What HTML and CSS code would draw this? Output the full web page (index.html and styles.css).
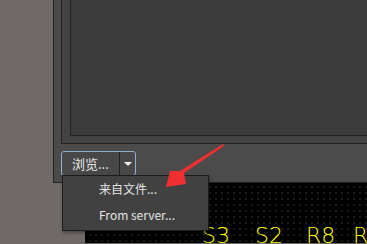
FILE: index.html
```html
<!DOCTYPE html>
<html lang="zh-cn">
<head>
  <meta charset="UTF-8">
  <title>浏览</title>
  <link rel="stylesheet" href="styles.css">
</head>
<body>

<div class="stage">
  <div class="frame">
    <div class="group">
      <div class="inner"></div>
    </div>
    <div class="toolbar">
      <div class="split-btn">
        <span class="btn-main">浏览...</span>
        <span class="btn-drop"><span class="tri"></span></span>
      </div>
    </div>
  </div>

  <div class="canvas">
    <span class="lbl" style="left: 117px">S3</span>
    <span class="lbl" style="left: 170px">S2</span>
    <span class="lbl" style="left: 221px">R8</span>
    <span class="lbl" style="left: 268px">R</span>
  </div>

  <!-- popup menu of the split button -->
  <ul class="menu">
    <li>来自文件...</li>
    <li>From server...</li>
  </ul>

  <svg class="pointer" width="367" height="244" viewBox="0 0 367 244">
    <polygon points="223,144 224,146 184,173 186,184 166,187 170,171 180,171" fill="#f03030"/>
  </svg>
</div>

</body>
</html>
```

FILE: styles.css
```css
body {
  margin: 0;
  padding: 0;
  font-family: "Noto Sans CJK SC", "Noto Sans", sans-serif;
}
.stage {
  position: relative;
  width: 367px;
  height: 244px;
  overflow: hidden;
  background-color: #6f6a68;
}
.frame {
  margin-left: 53px;
  margin-top: -2px;
  width: 330px;
  height: 185px;
  box-sizing: border-box;
  border: 1px solid #222;
  background-color: #4b4b4b;
  padding-left: 7px;
}
.group {
  height: 145px;
  box-sizing: border-box;
  border: 1px solid #222;
  border-right: none;
  background-color: #434343;
  padding-left: 8px;
}
.inner {
  height: 136px;
  box-sizing: border-box;
  border-left: 1px solid #222;
  border-bottom: 1px solid #222;
  background-color: #3b3b3b;
}
.toolbar {
  display: flex;
  margin-top: 7px;
}
.split-btn {
  display: flex;
  height: 25px;
  box-sizing: border-box;
  border: 1px solid #8fb0d0;
  border-radius: 3px;
  background-color: #484848;
  color: #e8e8e8;
  font-size: 13px;
}
.btn-main {
  display: flex;
  align-items: center;
  width: 58px;
  padding-left: 10px;
  box-sizing: border-box;
  border-right: 1px solid #222;
  line-height: 1;
}
.btn-drop {
  display: flex;
  align-items: center;
  justify-content: center;
  width: 15px;
}
.tri {
  width: 0;
  height: 0;
  border-left: 4px solid transparent;
  border-right: 4px solid transparent;
  border-top: 4px solid #f0f0f0;
}
.canvas {
  position: relative;
  margin-left: 85px;
  height: 60px;
  background-color: #000;
  background-image: radial-gradient(circle, #3a3a3a 0.6px, transparent 0.8px);
  background-size: 6px 6px;
  background-position: 2px 1px;
  overflow: hidden;
}
.lbl {
  position: absolute;
  top: 42px;
  font-family: "DejaVu Sans", sans-serif;
  font-weight: 200;
  font-size: 22px;
  line-height: 22px;
  color: #ffff00;
}
.menu {
  position: absolute;
  left: 62px;
  top: 175px;
  width: 147px;
  height: 56px;
  box-sizing: border-box;
  margin: 0;
  padding: 0;
  list-style: none;
  background-color: #414141;
  border: 1px solid #1c1c1c;
  box-shadow: 1px 2px 3px rgba(0, 0, 0, 0.35);
  color: #e4e4e4;
  font-size: 12px;
}
.menu li {
  height: 26px;
  line-height: 26px;
  padding-left: 36px;
}
.pointer {
  position: absolute;
  left: 0;
  top: 0;
}
```
